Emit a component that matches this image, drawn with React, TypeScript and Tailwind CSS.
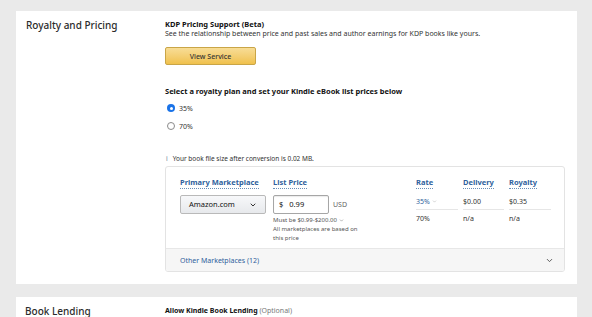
import { ChevronDown } from "lucide-react";

const font = { fontFamily: '"Noto Sans", Arial, sans-serif' };

const HeadLink = ({ children }: { children: React.ReactNode }) => (
  <span className="inline-block border-b border-dotted border-[#6a8fb8] pb-[1px] text-[7.5px] font-bold leading-[9px] text-[#2f5f9c]">
    {children}
  </span>
);

const Radio = ({ checked, label }: { checked?: boolean; label: string }) => (
  <div className="flex h-[10px] items-center gap-[4px]">
    {checked ? (
      <span className="flex h-[8px] w-[8px] items-center justify-center rounded-full bg-[#1a73e8]">
        <span className="h-[3px] w-[3px] rounded-full bg-white" />
      </span>
    ) : (
      <span className="h-[8px] w-[8px] rounded-full border border-[#8a8a8a] bg-white" />
    )}
    <span className="text-[7px] text-[#333]">{label}</span>
  </div>
);

const Cell = ({ w, children, blue }: { w: string; children: React.ReactNode; blue?: boolean }) => (
  <div className={`${w} shrink-0`}>
    <div
      className={`flex h-[16px] items-center border-b border-[#e6e6e6] text-[7px] ${
        blue ? "text-[#2f5f9c]" : "text-[#333]"
      }`}
    >
      {children}
    </div>
  </div>
);

export default function App() {
  return (
    <div
      className="h-[317px] w-[592px] overflow-hidden bg-[#eaeaea] pt-[11px] text-[7px] leading-[9px]"
      style={font}
    >
      {/* Royalty and Pricing */}
      <section className="ml-[16px] mr-[15px] flex h-[273px] bg-white">
        <div className="w-[149px] shrink-0 pl-[10px] pt-[9px]">
          <h2 className="text-[10px] font-medium leading-[10px] text-[#2b2b2b]">Royalty and Pricing</h2>
        </div>

        <div className="flex-1 pr-[12px] pt-[8px]">
          <div className="text-[7.5px] font-bold leading-[10px] text-[#111]">KDP Pricing Support (Beta)</div>
          <div className="text-[7px] leading-[9px] text-[#333]">
            See the relationship between price and past sales and author earnings for KDP books like yours.
          </div>

          <button className="mt-[9px] flex h-[18px] w-[91px] items-center justify-center rounded-[2px] border border-[#c9a547] bg-gradient-to-b from-[#f8dd96] to-[#f0c14b] text-[7px] font-medium text-[#333]">
            View Service
          </button>

          <div className="mt-[21px] text-[7.5px] font-bold leading-[10px] text-[#111]">
            Select a royalty plan and set your Kindle eBook list prices below
          </div>
          <div className="mt-[7px] flex flex-col gap-[8px] pl-[2px]">
            <Radio checked label="35%" />
            <Radio label="70%" />
          </div>

          <div className="mt-[24px] flex items-center gap-[5px] pl-[1px] text-[6.5px] leading-[8px] text-[#333]">
            <span className="text-[#6b7f99]">i</span>
            <span>Your book file size after conversion is 0.02 MB.</span>
          </div>

          {/* Pricing table */}
          <div className="mt-[3px] overflow-hidden rounded-[3px] border border-[#e3e3e3]">
            <div className="flex h-[81px] pl-[14px] pt-[11px]">
              <div className="w-[93px] shrink-0">
                <HeadLink>Primary Marketplace</HeadLink>
                <div className="mt-[6px] flex h-[19px] w-[86px] items-center justify-between rounded-[2px] border border-[#b9b9b9] bg-gradient-to-b from-[#f7f8fa] to-[#e7e9ec] px-[8px] text-[7.5px] text-[#111]">
                  <span>Amazon.com</span>
                  <ChevronDown className="h-[8px] w-[8px] text-[#333]" strokeWidth={3} />
                </div>
              </div>

              <div className="w-[143px] shrink-0">
                <HeadLink>List Price</HeadLink>
                <div className="mt-[6px] flex items-center gap-[4px]">
                  <div className="flex h-[19px] w-[56px] items-center gap-[6px] rounded-[2px] border border-[#a6a6a6] bg-white px-[5px] text-[7.5px] text-[#111] shadow-[inset_0_1px_1px_rgba(0,0,0,0.08)]">
                    <span>$</span>
                    <span>0.99</span>
                  </div>
                  <span className="text-[7px] text-[#666]">USD</span>
                </div>
                <div className="mt-[2px] text-[6px] leading-[9px] text-[#555]">
                  <div className="flex items-center gap-[2px]">
                    Must be $0.99-$200.00
                    <ChevronDown className="h-[5px] w-[5px]" strokeWidth={2} />
                  </div>
                  <div>All marketplaces are based on</div>
                  <div>this price</div>
                </div>
              </div>

              <div className="flex-1">
                <div className="flex">
                  <div className="w-[47px]"><HeadLink>Rate</HeadLink></div>
                  <div className="w-[46px]"><HeadLink>Delivery</HeadLink></div>
                  <div className="w-[46px]"><HeadLink>Royalty</HeadLink></div>
                </div>
                <div className="mt-[5px] flex">
                  <Cell w="w-[47px] pr-[5px]" blue>
                    <span className="flex items-center gap-[2px]">
                      35%
                      <ChevronDown className="h-[5px] w-[5px] text-[#999]" strokeWidth={2} />
                    </span>
                  </Cell>
                  <Cell w="w-[46px] pr-[5px]">$0.00</Cell>
                  <Cell w="w-[46px] pr-[4px]">$0.35</Cell>
                </div>
                <div className="flex text-[7px] leading-[17px] text-[#333]">
                  <div className="w-[47px]">70%</div>
                  <div className="w-[46px]">n/a</div>
                  <div className="w-[46px]">n/a</div>
                </div>
              </div>
            </div>

            <div className="flex h-[23px] items-center justify-between border-t border-[#e7e7e7] bg-[#f6f6f6] pl-[14px] pr-[10px]">
              <span className="text-[7px] text-[#2f5f9c]">Other Marketplaces (12)</span>
              <ChevronDown className="h-[9px] w-[9px] text-[#555]" strokeWidth={2.5} />
            </div>
          </div>
        </div>
      </section>

      {/* Book Lending */}
      <section className="ml-[16px] mr-[15px] mt-[13px] flex h-[40px] bg-white">
        <div className="w-[149px] shrink-0 pl-[9px] pt-[9px]">
          <h2 className="text-[10px] font-medium leading-[10px] text-[#2b2b2b]">Book Lending</h2>
        </div>
        <div className="flex-1 pt-[9px] text-[7px] leading-[9px]">
          <span className="font-bold text-[#111]">Allow Kindle Book Lending</span>{" "}
          <span className="text-[#777]">(Optional)</span>
        </div>
      </section>
    </div>
  );
}
